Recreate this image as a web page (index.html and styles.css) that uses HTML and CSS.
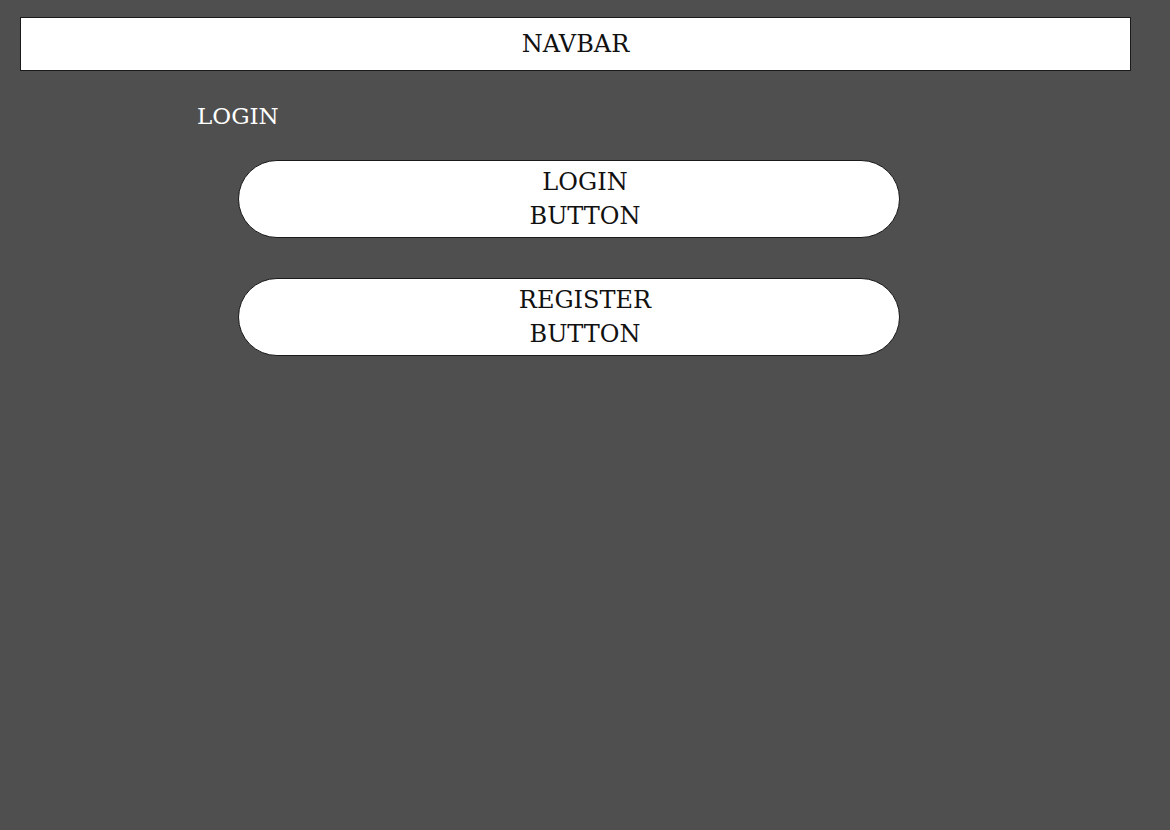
FILE: index.html
```html
<!DOCTYPE html>
<html>
<head>
<meta charset="utf-8">
<link rel="stylesheet" href="styles.css">
</head>
<body>
<header class="navbar">NAVBAR</header>
<main class="content">
  <h1 class="title">LOGIN</h1>
  <div class="buttons">
    <button class="pill">LOGIN<br>BUTTON</button>
    <button class="pill">REGISTER<br>BUTTON</button>
  </div>
</main>
</body>
</html>
```
FILE: styles.css
```css
html, body {
  margin: 0;
  padding: 0;
  background: #4f4f4f;
  height: 100%;
}
body {
  font-family: "DejaVu Serif", serif;
  font-size: 24px;
  padding: 17px 39px 0 20px;
  box-sizing: border-box;
}
.navbar {
  background: #fff;
  border: 1px solid #1a1a1a;
  height: 54px;
  box-sizing: border-box;
  display: flex;
  align-items: center;
  justify-content: center;
  color: #111;
}
.content {
  padding-left: 177px;
}
.title {
  margin: 0;
  padding-top: 30px;
  font-weight: normal;
  font-size: 23px;
  line-height: 30px;
  color: #fff;
}
.buttons {
  display: flex;
  flex-direction: column;
  gap: 40px;
  margin-top: 29px;
  padding-left: 41px;
}
.pill {
  width: 662px;
  height: 78px;
  border-radius: 39px;
  border: 1px solid #1a1a1a;
  background: #fff;
  font-family: inherit;
  font-size: 24px;
  line-height: 34px;
  color: #111;
  padding: 0 0 0 32px;
  text-align: center;
}
```
